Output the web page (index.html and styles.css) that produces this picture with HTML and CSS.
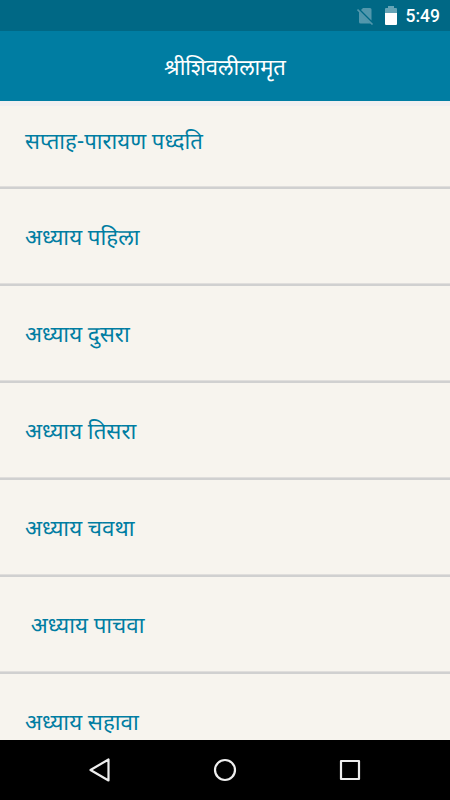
FILE: index.html
```html
<!DOCTYPE html>
<html lang="mr">
<head>
<meta charset="utf-8">
<title>श्रीशिवलीलामृत</title>
<link rel="stylesheet" href="styles.css">
</head>
<body>
<div class="screen">
  <div class="status">
    <svg class="sim" width="17" height="18" viewBox="0 0 17 18"><path d="M6 1H13a1.500 1.500 0 0 1 1.500 1.500V13.500L4 3zM2 4.500L14 16.500H3.500a1.500 1.500 0 0 1-1.500-1.500z" fill="#5297ac"/><path d="M.5 2.500L15.500 17.500" stroke="#5297ac" stroke-width="1.600"/></svg>
    <svg class="battery" width="12" height="19" viewBox="0 0 12 19"><path d="M1 2h2V0h6v2h2a1 1 0 0 1 1 1v4H0V3a1 1 0 0 1 1-1z" fill="#66a4b6"/><path d="M0 7h12v11a1 1 0 0 1-1 1H1a1 1 0 0 1-1-1z" fill="#fff"/></svg>
    <span class="clock">5:49</span>
  </div>
  <header class="bar"><h1>श्रीशिवलीलामृत</h1></header>
  <main class="list">
    <div class="row first"><span>सप्ताह-पारायण पध्दति</span></div>
    <div class="row"><span>अध्याय पहिला</span></div>
    <div class="row"><span>अध्याय दुसरा</span></div>
    <div class="row"><span>अध्याय तिसरा</span></div>
    <div class="row"><span>अध्याय चवथा</span></div>
    <div class="row"><span>&nbsp;अध्याय पाचवा</span></div>
    <div class="row"><span>अध्याय सहावा</span></div>
  </main>
  <nav class="nav">
    <svg width="24" height="26" viewBox="0 0 24 26"><path d="M20.500 2.500v21L2.500 13z"/></svg>
    <svg width="24" height="24" viewBox="0 0 24 24"><circle cx="12" cy="12" r="10"/></svg>
    <svg width="24" height="24" viewBox="0 0 24 24"><rect x="3" y="3" width="18" height="18"/></svg>
  </nav>
</div>
</body>
</html>
```
FILE: styles.css
```css
* { box-sizing: border-box; }
body { margin: 0; font-family: "Noto Sans Devanagari", "Noto Sans", Roboto, sans-serif; }
.screen { width: 450px; height: 800px; display: flex; flex-direction: column; overflow: hidden; background: #f7f4ee; }
.status { height: 31px; flex: none; background: #006885; display: flex; align-items: center; justify-content: flex-end; padding-right: 10px; }
.battery { margin-left: 11px; }
.clock { margin-left: 9px; font: 500 17.500px/31px Roboto, sans-serif; color: #fff; padding-top: 1px; }
.bar { height: 70px; flex: none; background: #007da2; display: flex; align-items: center; justify-content: center; padding-top: 8px; }
.bar h1 { margin: 0; font-size: 22px; line-height: 32px; font-weight: 400; color: #fff; }
.list { flex: 1; min-height: 0; overflow: hidden; border-top: 5px solid #f0eff0; }
.row { height: 97px; padding: 7px 0 0 25px; display: flex; align-items: center; border-bottom: 2px solid #d0d0d0; box-shadow: inset 0 -1px #e0dedc; color: #007da2; font-size: 22.300px; line-height: 32px; white-space: pre; }
.first { height: 83px; padding: 0 0 6px 25px; font-size: 22.100px; }
.nav { height: 60px; flex: none; background: #000; display: flex; align-items: center; justify-content: center; gap: 101px; }
.nav svg { fill: none; stroke: #eee; stroke-width: 2.200; stroke-linejoin: round; }
```
